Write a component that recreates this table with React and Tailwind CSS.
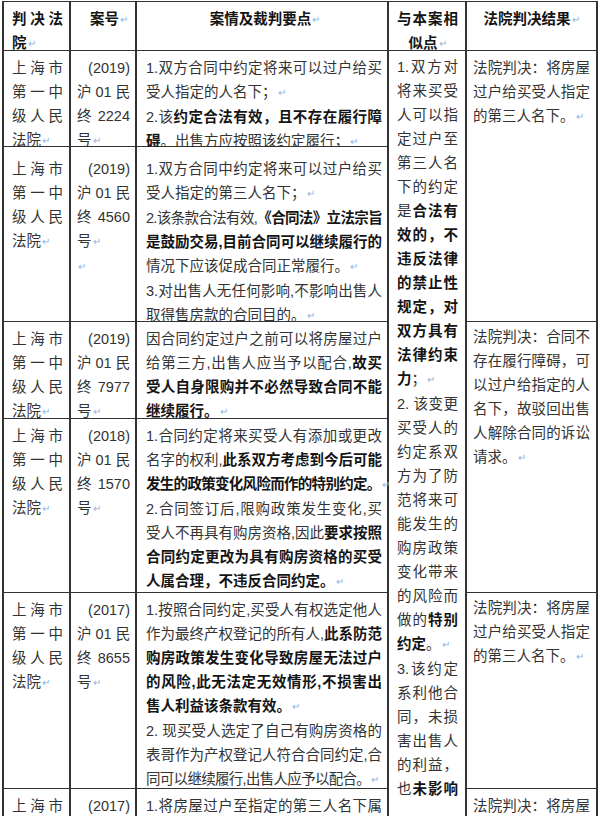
import React from "react";

function Ln({ j, t, r, c, children }) {
  let cls = "whitespace-nowrap";
  if (j && t) cls = "whitespace-nowrap text-justify [text-align-last:justify] tracking-[-0.7px]";
  else if (j) cls = "whitespace-nowrap text-justify [text-align-last:justify]";
  else if (t) cls = "whitespace-nowrap tracking-[-0.7px]";
  else if (r) cls = "whitespace-nowrap text-right";
  else if (c) cls = "whitespace-nowrap text-center";
  return <div className={cls}>{children}</div>;
}

function P() {
  return <span className="ml-px align-[1px] text-[10px] font-normal text-[#8fb3dd]">↵</span>;
}

function B({ children }) {
  return <span className="font-bold text-[#141414]">{children}</span>;
}

const base = "bg-white text-[14.5px] leading-[24px] text-[#333]";
const c1 = base + " col-start-1 pl-[8px] pr-[6px]";
const c2 = base + " col-start-2 pl-[6px] pr-[5px]";
const c3 = base + " col-start-3 pl-[9px] pr-[5px]";
const c5 = base + " col-start-5 pl-[6px] pr-[6px]";

function Court() {
  return (
    <>
      <Ln j>上海市</Ln>
      <Ln j>第一中</Ln>
      <Ln j>级人民</Ln>
      <Ln>法院<P /></Ln>
    </>
  );
}

function CaseNo({ y, n, extra }) {
  return (
    <>
      <Ln r>({y})</Ln>
      <Ln j>沪 01 民</Ln>
      <Ln j>终 {n}</Ln>
      <Ln>号<P /></Ln>
      {extra ? <Ln><P /></Ln> : null}
    </>
  );
}

function Result1() {
  return (
    <>
      <Ln j>法院判决：将房屋</Ln>
      <Ln j>过户给买受人指定</Ln>
      <Ln>的第三人名下。<P /></Ln>
    </>
  );
}

export default function App() {
  return (
    <div className="w-[600px] h-[816px] overflow-hidden bg-white font-['Liberation_Sans','Noto_Sans_CJK_SC',sans-serif]">
      <div className="ml-[2px] mt-px grid w-[596px] grid-cols-[65px_64px_250px_76px_129px] grid-rows-[48px_95px_174px_96px_173px_195px_60px] gap-x-[2px] gap-y-px border-x-2 border-t border-[#333] bg-[#333]">
        {/* header */}
        <div className={base + " col-start-1 row-start-1 pl-[8px] pr-[6px] pt-[5px] font-bold text-[#141414]"}>
          <Ln j>判决法</Ln>
          <Ln>院<P /></Ln>
        </div>
        <div className={base + " col-start-2 row-start-1 pl-[12px] pt-[5px] font-bold text-[#141414]"}>
          <Ln c>案号<P /></Ln>
        </div>
        <div className={base + " col-start-3 row-start-1 pl-[6px] pt-[5px] font-bold text-[#141414]"}>
          <Ln c>案情及裁判要点<P /></Ln>
        </div>
        <div className={base + " col-start-4 row-start-1 pl-[8px] pr-[7px] pt-[5px] font-bold text-[#141414]"}>
          <Ln j>与本案相</Ln>
          <Ln c>似点<P /></Ln>
        </div>
        <div className={base + " col-start-5 row-start-1 pt-[5px] font-bold text-[#141414]"}>
          <Ln c>法院判决结果<P /></Ln>
        </div>

        {/* row 1 */}
        <div className={c1 + " row-start-2 pt-[5px]"}><Court /></div>
        <div className={c2 + " row-start-2 pt-[5px]"}><CaseNo y="2019" n="2224" /></div>
        <div className={c3 + " row-start-2 pt-[5px]"}>
          <Ln j>1.双方合同中约定将来可以过户给买</Ln>
          <Ln>受人指定的人名下；<P /></Ln>
          <Ln j>2.该<B>约定合法有效，且不存在履行障</B></Ln>
          <Ln><B>碍</B>。出售方应按照该约定履行；<P /></Ln>
        </div>

        {/* column 4 merged */}
        <div className={base + " col-start-4 row-start-2 row-span-6 pl-[8px] pr-[7px] pt-[4px] leading-[24.5px]"}>
          <Ln j>1.双方对</Ln>
          <Ln j>将来买受</Ln>
          <Ln j>人可以指</Ln>
          <Ln j>定过户至</Ln>
          <Ln j>第三人名</Ln>
          <Ln j>下的约定</Ln>
          <Ln j>是<B>合法有</B></Ln>
          <Ln j><B>效的，不</B></Ln>
          <Ln j><B>违反法律</B></Ln>
          <Ln j><B>的禁止性</B></Ln>
          <Ln j><B>规定，对</B></Ln>
          <Ln j><B>双方具有</B></Ln>
          <Ln j><B>法律约束</B></Ln>
          <Ln><B>力</B>；<P /></Ln>
          <Ln j>2. 该变更</Ln>
          <Ln j>买受人的</Ln>
          <Ln j>约定系双</Ln>
          <Ln j>方为了防</Ln>
          <Ln j>范将来可</Ln>
          <Ln j>能发生的</Ln>
          <Ln j>购房政策</Ln>
          <Ln j>变化带来</Ln>
          <Ln j>的风险而</Ln>
          <Ln j>做的<B>特别</B></Ln>
          <Ln><B>约定</B>。<P /></Ln>
          <Ln j>3.该约定</Ln>
          <Ln j>系利他合</Ln>
          <Ln j>同，未损</Ln>
          <Ln j>害出售人</Ln>
          <Ln j>的利益，</Ln>
          <Ln j>也<B>未影响</B></Ln>
        </div>

        {/* column 5 */}
        <div className={c5 + " row-start-2 row-span-2 pt-[5px]"}><Result1 /></div>
        <div className={c5 + " row-start-4 row-span-2 pt-[3px]"}>
          <Ln j>法院判决：合同不</Ln>
          <Ln j>存在履行障碍，可</Ln>
          <Ln j>以过户给指定的人</Ln>
          <Ln j>名下，故驳回出售</Ln>
          <Ln j>人解除合同的诉讼</Ln>
          <Ln>请求。<P /></Ln>
        </div>
        <div className={c5 + " row-start-6 pt-[3px]"}><Result1 /></div>
        <div className={c5 + " row-start-7 pt-[5px]"}>
          <Ln j>法院判决：将房屋</Ln>
        </div>

        {/* row 2 */}
        <div className={c1 + " row-start-3 pt-[10px]"}><Court /></div>
        <div className={c2 + " row-start-3 pt-[10px]"}><CaseNo y="2019" n="4560" extra /></div>
        <div className={c3 + " row-start-3 pt-[10px]"}>
          <Ln j>1.双方合同中约定将来可以过户给买</Ln>
          <Ln>受人指定的第三人名下；<P /></Ln>
          <Ln j t>2.该条款合法有效,<B>《合同法》立法宗旨</B></Ln>
          <Ln j><B>是鼓励交易,目前合同可以继续履行的</B></Ln>
          <Ln>情况下应该促成合同正常履行。<P /></Ln>
          <Ln j>3.对出售人无任何影响,不影响出售人</Ln>
          <Ln>取得售房款的合同目的。<P /></Ln>
        </div>

        {/* row 3 */}
        <div className={c1 + " row-start-4 pt-[5px]"}><Court /></div>
        <div className={c2 + " row-start-4 pt-[5px]"}><CaseNo y="2019" n="7977" /></div>
        <div className={c3 + " row-start-4 pt-[5px]"}>
          <Ln j>因合同约定过户之前可以将房屋过户</Ln>
          <Ln j>给第三方,出售人应当予以配合,<B>故买</B></Ln>
          <Ln j><B>受人自身限购并不必然导致合同不能</B></Ln>
          <Ln><B>继续履行。</B><P /></Ln>
        </div>

        {/* row 4 */}
        <div className={c1 + " row-start-5 pt-[5px]"}><Court /></div>
        <div className={c2 + " row-start-5 pt-[5px]"}><CaseNo y="2018" n="1570" /></div>
        <div className={c3 + " row-start-5 pt-[5px]"}>
          <Ln j>1.合同约定将来买受人有添加或更改</Ln>
          <Ln j>名字的权利,<B>此系双方考虑到今后可能</B></Ln>
          <Ln t><B>发生的政策变化风险而作的特别约定。</B><P /></Ln>
          <Ln j>2.合同签订后,限购政策发生变化,买</Ln>
          <Ln j>受人不再具有购房资格,因此<B>要求按照</B></Ln>
          <Ln j><B>合同约定更改为具有购房资格的买受</B></Ln>
          <Ln><B>人属合理，不违反合同约定。</B><P /></Ln>
        </div>

        {/* row 5 */}
        <div className={c1 + " row-start-6 pt-[5px]"}><Court /></div>
        <div className={c2 + " row-start-6 pt-[5px]"}><CaseNo y="2017" n="8655" /></div>
        <div className={c3 + " row-start-6 pt-[5px]"}>
          <Ln j>1.按照合同约定,买受人有权选定他人</Ln>
          <Ln j>作为最终产权登记的所有人,<B>此系防范</B></Ln>
          <Ln j><B>购房政策发生变化导致房屋无法过户</B></Ln>
          <Ln j><B>的风险,此无法定无效情形,不损害出</B></Ln>
          <Ln><B>售人利益该条款有效。</B><P /></Ln>
          <Ln j>2. 现买受人选定了自己有购房资格的</Ln>
          <Ln j>表哥作为产权登记人符合合同约定,合</Ln>
          <Ln t>同可以继续履行,出售人应予以配合。<P /></Ln>
        </div>

        {/* row 6 */}
        <div className={c1 + " row-start-7 pt-[5px]"}>
          <Ln j>上海市</Ln>
        </div>
        <div className={c2 + " row-start-7 pt-[5px]"}>
          <Ln r>(2017)</Ln>
        </div>
        <div className={c3 + " row-start-7 pt-[5px]"}>
          <Ln j>1.将房屋过户至指定的第三人名下属</Ln>
        </div>
      </div>
    </div>
  );
}
